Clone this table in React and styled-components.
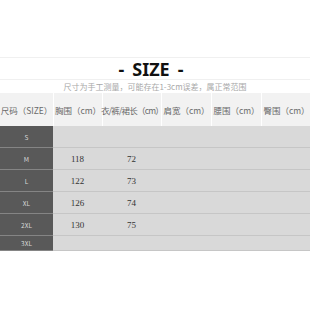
import React from "react";
import styled, { createGlobalStyle } from "styled-components";

const GlobalStyle = createGlobalStyle`
  html, body {
    margin: 0;
    padding: 0;
    background: #ffffff;
    overflow: hidden;
  }
  body {
    font-family: "Noto Sans CJK SC", "Noto Sans", sans-serif;
  }
`;

const COLS = "53px 49px 59px 50px 50px 50px";

const Page = styled.div`
  width: 310px;
  height: 310px;
  padding-top: 57px;
  box-sizing: border-box;
`;

const TitleBar = styled.div`
  height: 23px;
  border-top: 1px solid #f0f0f0;
  border-bottom: 1px solid #f0f0f0;
  display: flex;
  align-items: center;
  justify-content: center;
  padding-right: 8px;
  box-sizing: border-box;
  font-family: "Noto Sans", "Noto Sans CJK SC", sans-serif;
  font-weight: 700;
  font-size: 18px;
  color: #111;
  line-height: 1;
`;

const Dash = styled.span`
  margin: 0 8px;
  font-weight: 700;
`;

const Note = styled.div`
  height: 13px;
  display: flex;
  align-items: center;
  justify-content: center;
  font-size: 8px;
  color: #a8a8a8;
  line-height: 1;
`;

const Table = styled.div`
  width: 311px;
`;

const Row = styled.div`
  display: grid;
  grid-template-columns: ${COLS};
  height: ${(p) => p.$h}px;
`;

const HeadCell = styled.div`
  background: #f2f2f2;
  display: flex;
  align-items: center;
  justify-content: center;
  font-size: 8.5px;
  letter-spacing: ${(p) => (p.$tight ? "-0.8px" : "0")};
  color: #6a6a6a;
  white-space: nowrap;
  border-left: ${(p) => (p.$first ? "none" : "1px solid #ffffff")};
  box-sizing: border-box;
`;

const SizeCell = styled.div`
  background: #595959;
  border-bottom: 1px solid #858585;
  display: flex;
  align-items: center;
  justify-content: center;
  font-size: 6.5px;
  color: #d8d8d8;
  box-sizing: border-box;
`;

const ValueCell = styled.div`
  background: #d9d9d9;
  border-bottom: 1px solid #c6c6c6;
  display: flex;
  align-items: center;
  justify-content: center;
  font-family: "Liberation Serif", serif;
  font-size: 9px;
  color: #333;
  box-sizing: border-box;
`;

const headers = [
  "尺码（SIZE）",
  "胸围（cm）",
  "衣/裤/裙长（cm）",
  "肩宽（cm）",
  "腰围（cm）",
  "臀围（cm）",
];

const rows = [
  { size: "S", vals: ["", ""], h: 22 },
  { size: "M", vals: ["118", "72"], h: 22 },
  { size: "L", vals: ["122", "73"], h: 22 },
  { size: "XL", vals: ["126", "74"], h: 22 },
  { size: "2XL", vals: ["130", "75"], h: 22 },
  { size: "3XL", vals: ["", ""], h: 15 },
];

export default function App() {
  return (
    <>
      <GlobalStyle />
      <Page>
        <TitleBar>
          <Dash>-</Dash>SIZE<Dash>-</Dash>
        </TitleBar>
        <Note>尺寸为手工测量，可能存在1-3cm误差，属正常范围</Note>
        <Table>
          <Row $h={33}>
            {headers.map((h, i) => (
              <HeadCell key={h} $first={i === 0} $tight={i === 2}>
                {h}
              </HeadCell>
            ))}
          </Row>
          {rows.map((r) => (
            <Row key={r.size} $h={r.h}>
              <SizeCell>{r.size}</SizeCell>
              <ValueCell>{r.vals[0]}</ValueCell>
              <ValueCell>{r.vals[1]}</ValueCell>
              <ValueCell />
              <ValueCell />
              <ValueCell />
            </Row>
          ))}
        </Table>
      </Page>
    </>
  );
}
